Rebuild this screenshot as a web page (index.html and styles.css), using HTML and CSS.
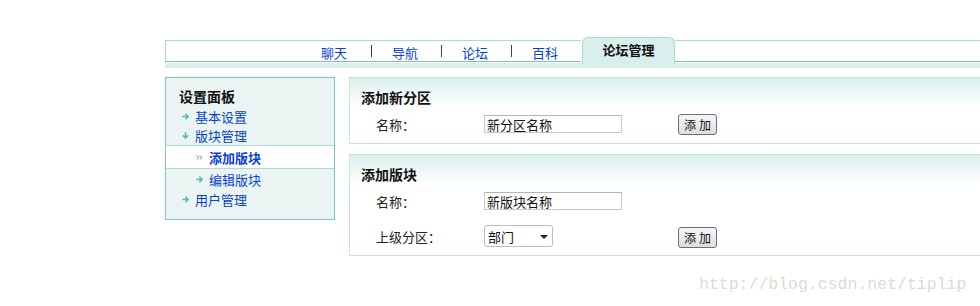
FILE: index.html
```html
<!DOCTYPE html>
<html lang="zh-CN">
<head>
    <meta charset="UTF-8">
    <title>论坛管理</title>
    <link rel="stylesheet" href="styles.css">
</head>
<body>
    <div class="page">
        <div class="topnav">
            <ul class="nav-links">
                <li><a href="#">聊天</a></li>
                <li><a href="#">导航</a></li>
                <li><a href="#">论坛</a></li>
                <li><a href="#">百科</a></li>
            </ul>
            <div class="nav-tab">论坛管理</div>
            <div class="nav-rest"></div>
        </div>
        <div class="nav-strip"></div>

        <div class="layout">
            <aside class="side">
                <h2 class="side-title">设置面板</h2>
                <ul class="side-menu">
                    <li class="item">
                        <svg class="arr" viewBox="0 0 7 7"><path d="M0.3 3.5H6 M3.4 0.9L6 3.5L3.4 6.1"/></svg>
                        <a href="#">基本设置</a>
                    </li>
                    <li class="item">
                        <svg class="arr" viewBox="0 0 7 7"><path d="M3.5 0.3V6 M0.9 3.4L3.5 6L6.1 3.4"/></svg>
                        <a href="#">版块管理</a>
                    </li>
                    <li class="item sub active">
                        <svg class="dbl" viewBox="0 0 8 7"><path d="M0.8 1.2L3.1 3.5L0.8 5.8 M4.3 1.2L6.6 3.5L4.3 5.8"/></svg>
                        <a href="#">添加版块</a>
                    </li>
                    <li class="item sub">
                        <svg class="arr" viewBox="0 0 7 7"><path d="M0.3 3.5H6 M3.4 0.9L6 3.5L3.4 6.1"/></svg>
                        <a href="#">编辑版块</a>
                    </li>
                    <li class="item">
                        <svg class="arr" viewBox="0 0 7 7"><path d="M0.3 3.5H6 M3.4 0.9L6 3.5L3.4 6.1"/></svg>
                        <a href="#">用户管理</a>
                    </li>
                </ul>
            </aside>

            <main class="main">
                <section class="panel">
                    <h3 class="panel-title">添加新分区</h3>
                    <div class="form-row">
                        <label class="form-label">名称：</label>
                        <input class="text-input" type="text" value="新分区名称">
                        <button class="btn">添加</button>
                    </div>
                </section>

                <section class="panel">
                    <h3 class="panel-title">添加版块</h3>
                    <div class="form-row">
                        <label class="form-label">名称：</label>
                        <input class="text-input" type="text" value="新版块名称">
                    </div>
                    <div class="form-row">
                        <label class="form-label">上级分区：</label>
                        <div class="select-box">
                            <select class="select">
                                <option>部门</option>
                            </select>
                        </div>
                        <button class="btn btn-low">添加</button>
                    </div>
                </section>
            </main>
        </div>
    </div>

    <div class="watermark">http://blog.csdn.net/tiplip</div>
</body>
</html>
```

FILE: styles.css
```css
html {
    overflow: hidden;
}

body {
    margin: 0;
    padding: 0;
    background: #ffffff;
    font-family: "Noto Sans CJK SC", "Noto Sans", sans-serif;
    font-size: 13px;
    color: #222222;
}

a {
    text-decoration: none;
}

.page {
    width: 830px;
    padding: 40px 0 0 165px;
}

/* top navigation */

.topnav {
    display: flex;
    height: 22px;
}

.nav-links {
    display: flex;
    align-items: center;
    margin: 0;
    padding: 0 0 0 135px;
    list-style: none;
    border: 1px solid #a5ddd6;
    border-bottom-color: #7fbfb8;
    border-right: none;
}

.nav-links li {
    display: flex;
    align-items: center;
    width: 50px;
    height: 12px;
    padding-left: 20px;
}

.nav-links li + li {
    border-left: 1px solid #1c3fb8;
    padding-left: 20px;
    width: 49px;
}

.nav-links a {
    margin-top: 4px;
    color: #0a3fd4;
    line-height: 12px;
    white-space: nowrap;
}

.nav-tab {
    align-self: flex-start;
    width: 91px;
    height: 26px;
    margin-top: -3px;
    margin-left: 1px;
    border: 1px solid #a5ddd6;
    border-bottom: none;
    border-radius: 6px 6px 0 0;
    background-color: #d8efeb;
    text-align: center;
    font-weight: bold;
    line-height: 24px;
    color: #111111;
}

.nav-rest {
    flex: 1;
    border-top: 1px solid #a5ddd6;
    border-bottom: 1px solid #7fbfb8;
}

.nav-strip {
    height: 5px;
    margin-top: 1px;
    background-color: #d8efeb;
}

/* layout */

.layout {
    display: flex;
    align-items: flex-start;
    gap: 14px;
    margin-top: 9px;
}

/* side menu */

.side {
    width: 168px;
    flex-shrink: 0;
    padding: 8px 0 10px;
    border: 1px solid #7cc9c1;
    background-color: #eaf5f3;
}

.side-title {
    margin: 0 0 1px;
    padding-left: 13px;
    font-size: 14px;
    line-height: 20px;
    color: #111111;
}

.side-menu {
    margin: 0;
    padding: 0;
    list-style: none;
}

.item {
    display: flex;
    align-items: center;
    height: 19px;
    padding-left: 16px;
}

.item a {
    color: #0a3fd4;
    margin-left: 6px;
}

.item.sub {
    padding-left: 30px;
}

.item.active {
    height: 22px;
    background-color: #ffffff;
    border-top: 1px solid #a9dcd6;
    border-bottom: 1px solid #a9dcd6;
}

.item.active a {
    font-weight: bold;
    margin-left: 6px;
}

.active ~ .item {
    height: 20px;
}

.arr {
    width: 7px;
    height: 7px;
    fill: none;
    stroke: #56bdb5;
    stroke-width: 1.6;
}

.dbl {
    width: 7px;
    height: 7px;
    fill: none;
    stroke: #555555;
    stroke-width: 0.9;
}

/* panels */

.main {
    flex: 1;
    display: flex;
    flex-direction: column;
    gap: 10px;
}

.panel {
    padding: 9px 0 6px 11px;
    border: 1px solid #c3e5e1;
    background: linear-gradient(#dbf0ed, #ffffff 30px);
}

.panel-title {
    margin: 0 0 4px;
    font-size: 14px;
    line-height: 20px;
    color: #111111;
}

.form-row {
    display: flex;
    align-items: center;
    height: 26px;
    padding-left: 15px;
}

.form-row + .form-row {
    margin-top: 9px;
}

.form-label {
    width: 108px;
    color: #222222;
}

.text-input {
    box-sizing: border-box;
    width: 138px;
    height: 18px;
    margin: 0;
    padding: 0 2px;
    border: 1px solid #c9c9c9;
    border-top-color: #b4b4b4;
    font-family: inherit;
    font-size: 13px;
    color: #111111;
}

.select-box {
    position: relative;
    width: 69px;
    height: 22px;
}

.select {
    box-sizing: border-box;
    width: 100%;
    height: 100%;
    margin: 0;
    padding: 0 0 0 3px;
    border: 1px solid #bdbdbd;
    border-radius: 3px;
    background: #ffffff;
    appearance: none;
    -webkit-appearance: none;
    font-family: inherit;
    font-size: 13px;
    color: #111111;
}

.select-box::after {
    content: "";
    position: absolute;
    left: 56px;
    top: 10px;
    border-left: 4px solid transparent;
    border-right: 4px solid transparent;
    border-top: 4px solid #222222;
}

.btn {
    box-sizing: border-box;
    width: 39px;
    height: 21px;
    margin-left: 56px;
    padding: 0 0 0 3px;
    border: 1px solid #6f6f6f;
    border-radius: 3px;
    background: linear-gradient(#f6f6f6, #dedede);
    font-family: inherit;
    font-size: 12px;
    letter-spacing: 3px;
    color: #111111;
}

.btn-low {
    margin-left: 125px;
    margin-top: 2px;
}

.watermark {
    position: absolute;
    left: 699px;
    top: 275px;
    font-family: "Liberation Mono", monospace;
    font-size: 16.5px;
    color: #dddbd3;
    white-space: nowrap;
}
```
